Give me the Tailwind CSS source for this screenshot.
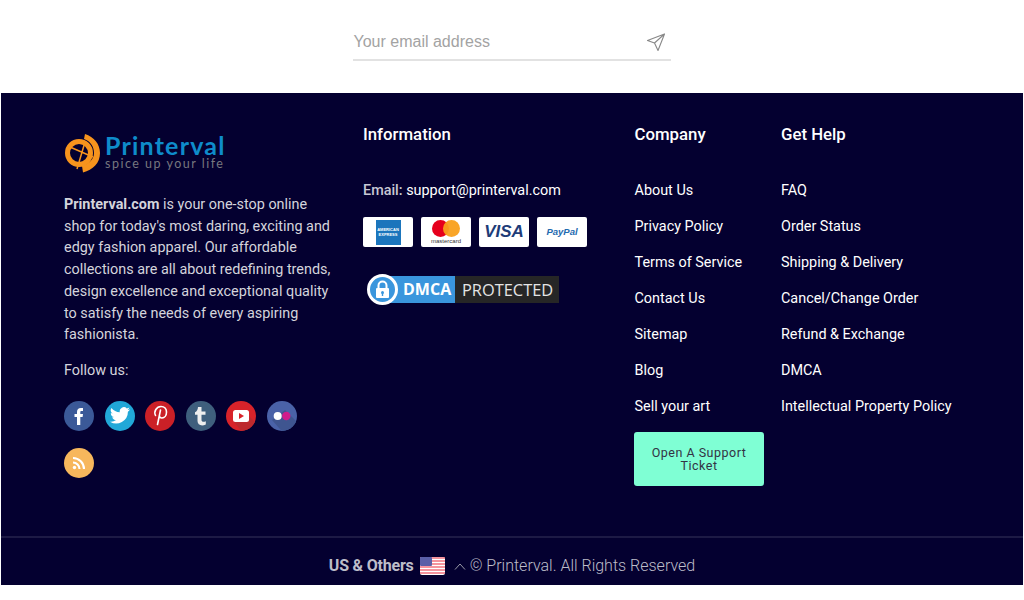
<!DOCTYPE html>
<html lang="en">
<head>
    <meta charset="UTF-8">
    <meta name="viewport" content="width=device-width, initial-scale=1.0">
    <script src="https://cdn.jsdelivr.net/npm/@tailwindcss/browser@4"></script>
    <title>Printerval footer</title>
</head>
<body class="bg-white font-['Roboto',sans-serif] h-[600px] overflow-hidden">
    <!-- newsletter -->
    <div class="h-[93px] flex justify-center pt-[21px]">
        <div class="w-[318px] h-[40px] ml-[-1px] border-b-2 border-[#e2e2e2] flex items-center justify-between pl-px pr-[3px]">
            <span class="font-['Liberation_Sans',sans-serif] text-[16px] text-[#a3a3a3] mt-[3px]">Your email address</span>
            <svg width="20" height="20" viewBox="0 0 20 20" fill="none" stroke="#888" stroke-width="1.100" stroke-linejoin="round" class="mr-[2px] mt-[3px]"><path d="M18.500 2 1.500 8.500 8.500 11 12 18.500 18.500 2ZM18.500 2 8.500 11"/></svg>
        </div>
    </div>

    <footer class="mx-px h-[492px] bg-[#040030] text-white flex flex-col">
        <div class="h-[443px] flex pl-[63px] pt-[30px]">
            <!-- about -->
            <div class="w-[299px]">
                <div class="flex items-center h-[42px] mt-[10px]">
                    <svg width="37" height="40" viewBox="0 0 37 40" fill="none" class="mt-[-1px]">
                        <circle cx="15" cy="19" r="11.500" stroke="#f7941d" stroke-width="5"/>
                        <path d="M21 0 C30 3 36 10 36 19 C36 29 29 36 19 38.500 L18 32 C25 30 30 25 30 19 C30 12 26 7 20 5Z" fill="#f7941d"/>
                        <path d="M6 13 29 23M13 35 21 8" stroke="#f7941d" stroke-width="1.500"/>
                    </svg>
                    <div class="ml-[4px] mt-[-3px] font-['Lato',sans-serif]">
                        <div class="text-[25px] leading-[23px] tracking-[1.200px] text-[#0e8ccb] font-bold">Printerval</div>
                        <div class="text-[12.500px] leading-[14px] tracking-[1.500px] text-[#77777f]">spice up your life</div>
                    </div>
                </div>
                <p class="mt-[19px] w-[270px] text-[14.400px] leading-[21.700px] text-[#d4d4dc]"><b class="font-bold">Printerval.com</b> is your one-stop online shop for today's most daring, exciting and edgy fashion apparel. Our affordable collections are all about redefining trends, design excellence and exceptional quality to satisfy the needs of every aspiring fashionista.</p>
                <p class="mt-[14px] text-[14.400px] leading-[21px] text-[#d4d4dc]">Follow us:</p>
                <div class="mt-[20px] flex flex-wrap w-[260px] gap-x-[10.600px] gap-y-[17px]">
                    <span class="w-[30px] h-[30px] rounded-full bg-[#3b5998] flex items-center justify-center">
                        <svg width="14" height="18" viewBox="0 0 14 18" fill="#fff"><path d="M5 18V10H2.500V7H5V5C5 2.500 6.500 1 8.800 1H11V4H9.500C8.600 4 8.300 4.500 8.300 5.200V7H11L10.600 10H8.300V18Z"/></svg>
                    </span>
                    <span class="w-[30px] h-[30px] rounded-full bg-[#21a8d8] flex items-center justify-center">
                        <svg width="20" height="17" viewBox="0 0 24 20" fill="#fff"><path d="M24 2.400a9.800 9.800 0 0 1-2.800.8A4.900 4.900 0 0 0 23.300.500a9.800 9.800 0 0 1-3.100 1.200 4.900 4.900 0 0 0-8.400 4.500A14 14 0 0 1 1.700 1a4.900 4.900 0 0 0 1.500 6.600 4.900 4.900 0 0 1-2.200-.6 4.900 4.900 0 0 0 3.900 4.900 4.900 4.900 0 0 1-2.200.1 4.900 4.900 0 0 0 4.600 3.400A9.900 9.900 0 0 1 0 17.400 14 14 0 0 0 21.500 5.600 10 10 0 0 0 24 2.400Z"/></svg>
                    </span>
                    <span class="w-[30px] h-[30px] rounded-full bg-[#cb2027] flex items-center justify-center">
                        <svg width="15" height="21" viewBox="0 0 15 21" fill="none" stroke="#fff" stroke-width="1.600" stroke-linecap="round"><path d="M2.500 10.500C.5 6.500 3.500 1.500 8 1.500c3.500 0 5.500 2.500 5.500 5.500 0 3.500-2 6-4.500 6-1.500 0-2.500-1-2.500-2M7.500 5 4.500 19.500"/></svg>
                    </span>
                    <span class="w-[30px] h-[30px] rounded-full bg-[#3f5f7d] flex items-center justify-center">
                        <svg width="13" height="20" viewBox="0 0 13 20" fill="#eee"><path d="M4 1H7.500V5.500H11.500V8.800H7.500V14C7.500 15.800 9.500 16.300 11.800 15.200V18.500C7.500 20.500 3.500 19 3.500 15V8.800H1V6.300C3 5.500 3.800 3.500 4 1Z"/></svg>
                    </span>
                    <span class="w-[30px] h-[30px] rounded-full bg-[#d8232a] overflow-hidden">
                        <svg width="30" height="30" viewBox="0 0 30 30"><path d="M23 15 38 30 22 38 8 21Z" fill="#bd2a2e"/><rect x="7" y="9" width="16" height="12" rx="2.500" fill="#fff"/><path d="M13 12 18 15 13 18Z" fill="#d8232a"/></svg>
                    </span>
                    <span class="w-[30px] h-[30px] rounded-full bg-[#4a62a8] overflow-hidden">
                        <svg width="30" height="30" viewBox="0 0 30 30"><path d="M18 9 36 27 20 36 5 19Z" fill="#3f5590"/><circle cx="10.700" cy="15" r="4" fill="#fff"/><circle cx="19.300" cy="15" r="4.200" fill="#d01c8b"/></svg>
                    </span>
                    <span class="w-[30px] h-[30px] rounded-full bg-[#f7b75c] flex items-center justify-center">
                        <svg width="14" height="14" viewBox="0 0 14 14" fill="none" stroke="#fff" stroke-width="2.100"><circle cx="2.500" cy="11.500" r="1.700" fill="#fff" stroke="none"/><path d="M1 6.500A6.500 6.500 0 0 1 7.500 13M1 2A11 11 0 0 1 12 13"/></svg>
                    </span>
                </div>
            </div>

            <!-- information -->
            <div class="w-[271.500px]">
                <h3 class="text-[16.800px] leading-[22px] font-medium">Information</h3>
                <p class="mt-[35px] text-[14.400px] leading-[21px]"><span class="font-medium text-[#c8c8d4]">Email:</span> support@printerval.com</p>
                <div class="mt-[16px] flex gap-[8px]">
                    <span class="w-[50px] h-[30px] bg-white rounded-[2px] flex items-center justify-center">
                        <span class="w-[25px] h-[25px] bg-[#1b75bc] flex flex-col items-center justify-center text-white font-bold text-[4px] leading-[5px] font-['Liberation_Sans',sans-serif]">
                            <span>AMERICAN</span><span>EXPRESS</span>
                        </span>
                    </span>
                    <span class="w-[50px] h-[30px] bg-white rounded-[2px] flex flex-col items-center justify-center">
                        <span class="flex h-[18px] mt-[1px]">
                            <span class="w-[17px] h-[17px] rounded-full bg-[#e6001c]"></span>
                            <span class="w-[17px] h-[17px] rounded-full bg-[#f9a01b]/95 ml-[-6px]"></span>
                        </span>
                        <span class="text-[6px] leading-[7px] text-[#333] font-['Liberation_Sans',sans-serif]">mastercard</span>
                    </span>
                    <span class="w-[50px] h-[30px] bg-white rounded-[2px] flex items-center justify-center font-['Liberation_Sans',sans-serif] italic font-bold text-[17px] text-[#1d3c78]">VISA</span>
                    <span class="w-[50px] h-[30px] bg-white rounded-[2px] flex items-center justify-center font-['Liberation_Sans',sans-serif] italic font-bold text-[9.500px] text-[#1f6bb0]">PayPal</span>
                </div>
                <div class="mt-[28px] ml-[4px] flex items-center h-[29px] relative font-['Open_Sans',sans-serif]">
                    <span class="absolute left-0 top-[-1px] w-[31px] h-[31px] rounded-full bg-[#3a96dd] border-[3px] border-white flex items-center justify-center">
                        <svg width="15" height="19" viewBox="0 0 15 19"><path d="M3.500 9V5.500a4 4 0 0 1 8 0V9" fill="none" stroke="#fff" stroke-width="2"/><rect x="1" y="8" width="13" height="10" rx="1" fill="#fff"/><circle cx="7.500" cy="12.500" r="1.500" fill="#3a96dd"/><rect x="6.800" y="13" width="1.400" height="3" fill="#3a96dd"/></svg>
                    </span>
                    <span class="ml-[14px] w-[74px] h-[27px] pl-[22px] bg-[#3a96dd] text-white font-bold text-[16px] leading-[27px]">DMCA</span>
                    <span class="w-[104px] h-[27px] pl-[7px] bg-[#262626] text-[#e4e4e4] text-[16.400px] leading-[27px]">PROTECTED</span>
                </div>
            </div>

            <!-- company -->
            <div class="w-[146.500px]">
                <h3 class="text-[16.800px] leading-[22px] font-medium">Company</h3>
                <ul class="mt-[35px] flex flex-col gap-[15px] text-[14.400px] leading-[21px]">
                    <li>About Us</li>
                    <li>Privacy Policy</li>
                    <li>Terms of Service</li>
                    <li>Contact Us</li>
                    <li>Sitemap</li>
                    <li>Blog</li>
                    <li>Sell your art</li>
                </ul>
                <button class="mt-[15px] ml-[-.5px] w-[130px] h-[54px] bg-[#7fffd4] rounded-[3px] text-[12.500px] leading-[13px] tracking-[.5px] text-[#333344]">Open A Support<br>Ticket</button>
            </div>

            <!-- help -->
            <div>
                <h3 class="text-[16.800px] leading-[22px] font-medium">Get Help</h3>
                <ul class="mt-[35px] flex flex-col gap-[15px] text-[14.400px] leading-[21px]">
                    <li>FAQ</li>
                    <li>Order Status</li>
                    <li>Shipping &amp; Delivery</li>
                    <li>Cancel/Change Order</li>
                    <li>Refund &amp; Exchange</li>
                    <li>DMCA</li>
                    <li>Intellectual Property Policy</li>
                </ul>
            </div>
        </div>

        <!-- bottom bar -->
        <div class="h-[49px] border-t-2 border-[#1d1a45] flex items-center justify-center text-[16px] text-[#bdbdc9] pt-[8px]">
            <b class="font-bold tracking-[-.2px]">US &amp; Others</b>
            <svg width="25" height="18" viewBox="0 0 25 18" class="ml-[6px]">
                <rect width="25" height="18" rx="2" fill="#fff"/>
                <path d="M0 1h25M0 4h25M0 7h25M0 10h25M0 13h25M0 16h25" stroke="#f2727f" stroke-width="1.500"/>
                <rect width="12" height="9" rx="1" fill="#5a5fa8"/>
            </svg>
            <svg width="12" height="7" viewBox="0 0 12 7" fill="none" stroke="#9a9aa8" class="ml-[9px] mt-[2px]"><path d="M1 6.500 6 1l5 5.500"/></svg>
            <span class="ml-[4px] font-light">© Printerval. All Rights Reserved</span>
        </div>
    </footer>
</body>
</html>
